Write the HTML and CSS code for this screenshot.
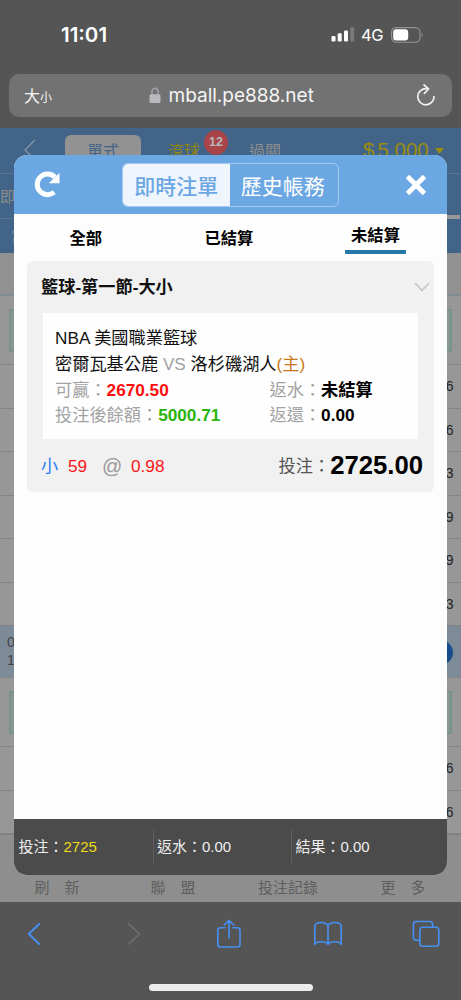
FILE: index.html
```html
<!DOCTYPE html>
<html lang="zh-Hant">
<head>
<meta charset="utf-8">
<title>即時注單</title>
<link rel="stylesheet" href="styles.css">
</head>
<body>
<div class="phone">
  <header class="status">
    <span class="clock">11:01</span>
    <svg class="signal" width="24" height="15" viewBox="0 0 24 15"><g fill="#fff"><rect x="0.5" y="9" width="4" height="5.5" rx="1.2"/><rect x="6.7" y="6.3" width="4" height="8.2" rx="1.2"/><rect x="13" y="3.4" width="4" height="11.1" rx="1.2"/></g><rect x="19.2" y="0.3" width="4" height="14.2" rx="1.2" fill="#7b7b7b"/></svg>
    <span class="network">4G</span>
    <svg class="battery" width="33" height="16" viewBox="0 0 33 16"><rect x="0.6" y="0.6" width="28.4" height="14.6" rx="4.6" fill="none" stroke="#949494" stroke-width="1.1"/><rect x="2.2" y="2.3" width="15" height="11.2" rx="3" fill="#fff"/><path d="M30.5 5.5q2.2 2.3 0 4.8z" fill="#949494"/></svg>
  </header>
  <div class="address">
    <span class="size">大<small>小</small></span>
    <svg class="lock" width="12" height="17" viewBox="0 0 12 17"><path d="M3 8V4.6a3 3.4 0 0 1 6 0V8" fill="none" stroke="#a3a3a7" stroke-width="1.5"/><rect x="0.5" y="7.2" width="11" height="8.8" rx="1.6" fill="#b9b9be"/></svg>
    <span class="url">mball.pe888.net</span>
    <svg class="reload" width="20" height="23" viewBox="0 0 20 23"><path d="M10.5 4.600A8.100 8.100 0 1 0 18 12.600M8 1l4.600 4L8.400 9.400" fill="none" stroke="#f2f2f2" stroke-width="1.7" stroke-linecap="round" stroke-linejoin="round"/></svg>
  </div>

  <main class="page">
    <div class="topbar">
      <svg class="top-back" width="12" height="22" viewBox="0 0 12 22"><path d="M11 1L1 11l10 10" fill="none" stroke="#8496a8" stroke-width="1.3"/></svg>
      <span class="top-tab">單式</span>
      <span class="top-live">滾球</span>
      <span class="top-combo">過關</span>
      <span class="balance">$<i></i>5,000</span>
      <svg class="caret" width="9" height="6" viewBox="0 0 9 6"><path d="M0 0h9L4.5 5.7z" fill="#9b8c0c"/></svg>
      <b class="badge">12</b>
    </div>
    <div class="subbar"><span>即</span><i></i></div>
    <div class="datebar">當</div>
    <div class="spacer"></div>
    <div class="league"><i></i></div>
    <div class="row">6</div>
    <div class="row">6</div>
    <div class="row">3</div>
    <div class="row">9</div>
    <div class="row">9</div>
    <div class="row">3</div>
    <div class="match"><span>0<br>1</span><i></i></div>
    <div class="league second"><i></i></div>
    <div class="row">6</div>
    <div class="row">6</div>
    <nav class="page-nav"><span class="wide">刷新</span><span class="wide">聯盟</span><span>投注記錄</span><span class="wide">更多</span></nav>

    <section class="modal">
      <div class="modal-head">
        <svg class="refresh" width="29" height="29" viewBox="0 0 29 29"><path d="M22 7.2A10.3 10.3 0 1 0 21.2 22.2" fill="none" stroke="#fff" stroke-width="5"/><path d="M26.5 3v10.2H15.8z" fill="#fff"/></svg>
        <div class="segments"><span class="on">即時注單</span><span>歷史帳務</span></div>
        <svg class="close" width="22" height="22" viewBox="0 0 22 22"><path d="M2.500 2.500l17 17M19.500 2.500l-17 17" stroke="#fff" stroke-width="5"/></svg>
      </div>
      <div class="tabs"><span>全部</span><span>已結算</span><span class="current">未結算</span></div>
      <article class="bet">
        <div class="bet-title"><span>籃球-第一節-大小</span><svg width="16" height="10" viewBox="0 0 16 10"><path d="M1 1l7 7.400L15 1" fill="none" stroke="#c8c8c8" stroke-width="1.8"/></svg></div>
        <div class="bet-body">
          <div>NBA 美國職業籃球</div>
          <div>密爾瓦基公鹿 <em>VS</em> 洛杉磯湖人<span class="host">(主)</span></div>
          <div class="pair"><span><em>可贏：</em><b class="red">2670.50</b></span><span><em>返水：</em><b>未結算</b></span></div>
          <div class="pair"><span><em>投注後餘額：</em><b class="green">5000.71</b></span><span><em>返還：</em><b>0.00</b></span></div>
        </div>
        <div class="bet-foot"><span class="pick">小</span><span class="line">59</span><span class="at">@</span><span class="odds">0.98</span><span class="stake">投注：<b>2725.00</b></span></div>
      </article>
      <footer class="totals"><span>投注：<em>2725</em></span><span>返水：0.00</span><span>結果：0.00</span></footer>
    </section>
  </main>

  <footer class="toolbar">
    <div class="tools">
      <svg width="28" height="30" viewBox="0 0 28 30"><path d="M19.200 5L8.800 15l10.400 10" fill="none" stroke="#4690f5" stroke-width="1.9" stroke-linecap="round" stroke-linejoin="round"/></svg>
      <svg width="28" height="30" viewBox="0 0 28 30"><path d="M10.800 5l10.600 10-10.600 10" fill="none" stroke="#6f6f6f" stroke-width="1.6" stroke-linecap="round" stroke-linejoin="round"/></svg>
      <svg width="28" height="30" viewBox="0 0 28 30"><path d="M10 8.700H5.300a2.500 2.500 0 0 0-2.500 2.500v14.300A2.500 2.500 0 0 0 5.300 28h17.200a2.500 2.500 0 0 0 2.500-2.500V11.200a2.500 2.500 0 0 0-2.500-2.500H18M14 19V1.500M9.200 6L14 1.200 18.800 6" fill="none" stroke="#4690f5" stroke-width="1.6" stroke-linecap="round" stroke-linejoin="round"/></svg>
      <svg width="30" height="30" viewBox="0 0 30 30"><path d="M15 6.500C13 2.800 4 2.300 1.800 6.300v19c2.200-3.600 11.200-3.200 13.200 0 2-3.200 11-3.600 13.200 0v-19C26 2.300 17 2.800 15 6.500zM15 6.500v18.800" fill="none" stroke="#4690f5" stroke-width="1.6" stroke-linejoin="round"/></svg>
      <svg width="28" height="30" viewBox="0 0 28 30"><g fill="none" stroke="#4690f5" stroke-width="1.6" stroke-linejoin="round"><rect x="7.800" y="8.300" width="19" height="19" rx="3"/><path d="M20.600 8V5.300a2.800 2.800 0 0 0-2.800-2.800H4.200a2.800 2.800 0 0 0-2.800 2.800v13.200a2.800 2.800 0 0 0 2.800 2.800h3.300"/></g></svg>
    </div>
    <div class="home"></div>
  </footer>
</div>
</body>
</html>
```

FILE: styles.css
```css
* { box-sizing: border-box; }
body { margin: 0; }
i, em { font-style: normal; }
svg { display: block; flex: none; }
.phone {
  width: 461px; height: 1000px; overflow: hidden; background: #555;
  display: flex; flex-direction: column; white-space: nowrap;
  font-family: "Liberation Sans", "Noto Sans CJK TC", sans-serif;
}
.status {
  height: 74px; flex: none; display: flex; align-items: center;
  padding: 0 37.500px 5px 61px; color: #fff; font-family: Inter, "Noto Sans", sans-serif;
}
.clock { font-size: 20.500px; font-weight: 600; flex: 1; }
.network { font-size: 16.500px; margin: 1px 7.500px 0 6.500px; letter-spacing: -.3px; width: 22px; }
.address {
  height: 42.500px; flex: none; margin: 0 9px 11.500px; padding: 0 16px 0 15px;
  border-radius: 10px; background: #727272; color: #f5f5f5;
  display: flex; align-items: center;
  font-family: Inter, "Noto Sans CJK TC", sans-serif; font-size: 19px;
}
.size { width: 125px; font-size: 16px; font-weight: 400; }
.size small { font-size: 12px; }
.url { margin-left: 7.500px; flex: 1; font-size: 19px; padding-top: 1px; }

.page { height: 774px; flex: none; position: relative; background: #979797; color: #222; }
.topbar {
  height: 46px; background: #426488; border-bottom: 1px solid #587491;
  display: flex; align-items: flex-start; position: relative; font-size: 16px; color: #8d8d8d;
}
.top-back { margin: 11px 0 0 24px; }
.top-tab {
  width: 76px; height: 36px; margin: 7px 0 0 29px; border-radius: 6px 6px 0 0;
  background: #929292; color: #426488; line-height: 33px; text-align: center; font-weight: 400;
}
.top-live { margin: 7px 0 0 27px; line-height: 34px; color: #8f8613; width: 32px; }
.top-combo { margin: 7px 0 0 49px; line-height: 34px; width: 32px; }
.balance { margin-left: 82px; line-height: 44px; font-size: 20.500px; color: #9b8c0c; display: flex; width: 68px; }
.balance i { width: 3px; }
.caret { margin: 20px 0 0 4px; }
.badge {
  position: absolute; left: 204px; top: 2px; width: 24px; height: 25px; border-radius: 50%;
  background: #a94549; color: #b8b8b8; font-size: 12.500px; line-height: 25px; text-align: center;
}
.subbar {
  height: 45px; background: #426488; border-bottom: 1px solid #587491;
  display: flex; justify-content: space-between; font-size: 15px; color: #8d8d8d; line-height: 45px;
}
.subbar i { width: 15px; height: 4px; margin: 41px 1px 0 0; background: #999; }
.datebar { height: 34px; padding-left: 11px; background: #426488; color: #71889e; font-size: 14px; line-height: 34px; }
.spacer { height: 43px; background: #919191; border-bottom: 2px solid #818b92; }
.league { height: 69px; padding: 13px 9px; border-bottom: 1px solid #848484; }
.league i { display: block; height: 43px; background: #8a9692; border: 2px solid #789489; }
.row {
  height: 43.500px; border-bottom: 1px solid #848484; text-align: right;
  padding-right: 7.500px; font-size: 14px; line-height: 43px;
}
.match {
  height: 52px; background: #7d8a98; border-bottom: 1px solid #858585;
  display: flex; justify-content: space-between; font-size: 14px; line-height: 17.500px; color: #444;
}
.match span { padding: 8px 0 0 7px; text-align: right; }
.match i { width: 25px; height: 25px; border-radius: 50%; background: #174d8c; margin: 14px 8.500px 0 0; }
.page-nav {
  height: 68px; background: #8e8e8e; border-top: 1px solid #818181; padding: 41px 0 0 34.500px;
  display: flex; font-size: 15px; line-height: 24px; color: #5f5f5f;
}
.page-nav span { flex: none; }
.page-nav .wide { letter-spacing: 15px; }
.page-nav span:nth-child(1) { width: 116px; }
.page-nav span:nth-child(2) { width: 107.500px; }
.page-nav span:nth-child(3) { width: 122.500px; }

.modal {
  position: absolute; left: 13.500px; top: 27px; width: 433px; height: 720px;
  border-radius: 13px; overflow: hidden; background: #fdfdfd; color: #111;
  display: flex; flex-direction: column;
}
.modal-head { height: 59px; flex: none; background: #6ba7e3; display: flex; align-items: center; padding-left: 19px; }
.segments {
  display: flex; width: 217px; height: 43.500px; margin: 1px 0 0 60.500px;
  border: 1px solid #a6caef; border-radius: 6px; overflow: hidden;
  color: #fff; font-size: 21px; line-height: 45px; text-align: center;
}
.segments span { flex: 1; }
.segments .on { flex: 0 0 106.500px; background: #eff5fc; color: #6ba7e3; font-weight: 500; }
.segments span + span { padding-right: 2px; }
.close { margin-left: 66px; }
.tabs { height: 47px; flex: none; display: flex; font-size: 16.300px; font-weight: 700; line-height: 48px; padding-left: 56px; color: #000; }
.tabs span:nth-child(1) { width: 135px; }
.tabs span:nth-child(2) { width: 140.500px; }
.tabs .current { width: 61px; height: 39.500px; line-height: 43px; text-align: center; border-bottom: 4px solid #2777a6; border-radius: 1px; }
.bet { height: 231px; flex: none; margin: 0 12.500px 0 13.500px; padding: 0 16px; border-radius: 6px; background: #f1f1f1; font-size: 17.200px; }
.bet-title { height: 51.500px; padding: 0 4px 0 14px; margin: 0 -16px; line-height: 52px; font-weight: 700; font-size: 17.200px; display: flex; justify-content: space-between; align-items: center; }
.bet-body { height: 126.500px; padding: 13.500px 12px 0; background: #fefefe; line-height: 25.800px; }
.bet-body em { color: #a2a2a2; }
.host { color: #c77718; }
.pair { display: flex; }
.pair span:first-child { width: 214.500px; }
b { color: #000; }
b.red { color: #fc0d0d; }
b.green { color: #2ab50d; }
b.badge { color: #b8b8b8; }
.bet-foot { height: 53px; display: flex; line-height: 54px; margin: 0 -5px 0 -2px; }
.pick { width: 27px; color: #287af5; }
.line { width: 34px; color: #fb1717; }
.at { width: 29px; color: #999; font-size: 20px; }
.odds { color: #fb1717; }
.stake { margin-left: auto; color: #555; display: flex; }
.stake b { font-size: 25.700px; line-height: 52px; }
.totals { height: 56px; flex: none; margin-top: auto; background: #4b4b4b; color: #eee; display: flex; align-items: center; font-size: 15px; line-height: 33px; padding-bottom: 1px; }
.totals em { color: #f1dc13; }
.totals span { padding-left: 5px; }
.totals span:first-child { width: 139px; }
.totals span + span { width: 138.500px; padding-left: 3.500px; border-left: 1px solid #5f5f5f; }

.toolbar { height: 98px; flex: none; background: #555; }
.tools { height: 82px; padding: 17px 21px 0 20px; display: flex; justify-content: space-between; }
.home { width: 164px; height: 6.500px; margin: 0 auto; border-radius: 4px; background: #ececec; }
```
